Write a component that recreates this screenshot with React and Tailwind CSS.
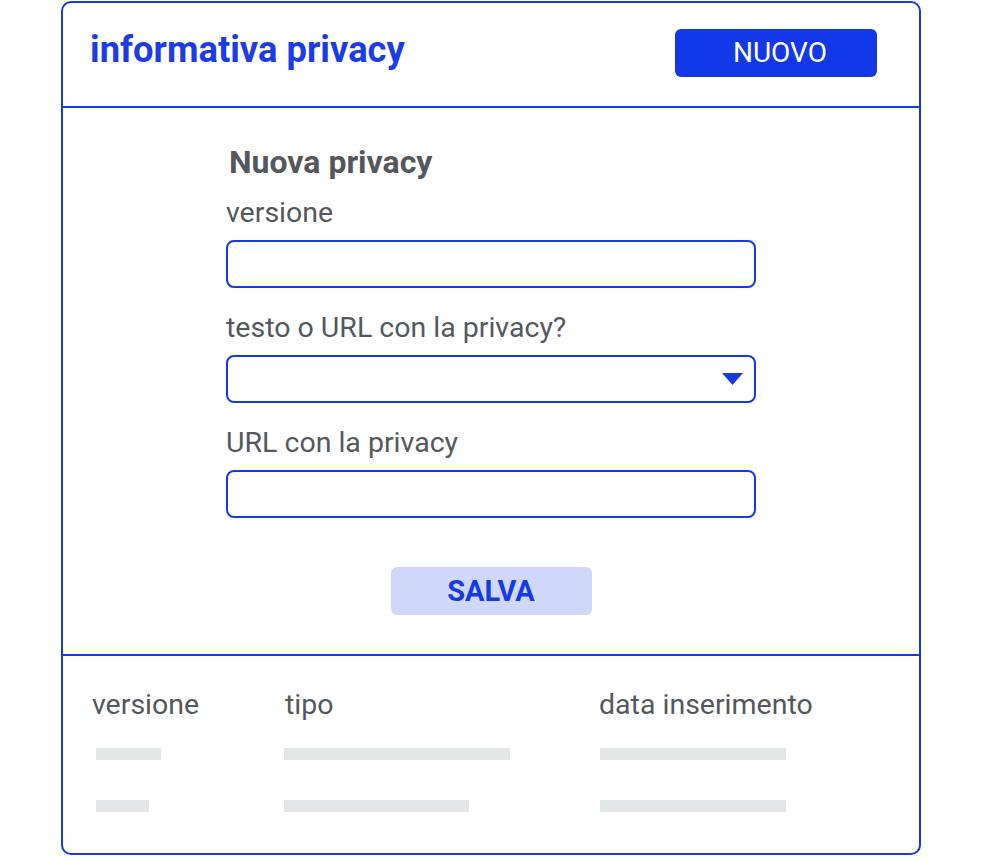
import React from "react";

const BLUE = "#1639e6";

const Field = ({ label, select, first }) => (
  <div className={first ? "mt-[21px]" : "mt-[26px]"}>
    <div className="text-[28.5px] leading-none text-[#54585c]">{label}</div>
    <div className="mt-[12.5px] h-[48px] rounded-[8px] border-2 border-[#1639e6] bg-white flex items-center justify-end pr-[11px]">
      {select && (
        <svg width="21" height="12" viewBox="0 0 21 12">
          <path d="M0 0h21L10.5 12z" fill={BLUE} />
        </svg>
      )}
    </div>
  </div>
);

const rows = [
  { v: "w-[65px]", t: "w-[226px]", d: "w-[186px]" },
  { v: "w-[53px]", t: "w-[185px]", d: "w-[186px]" },
];

export default function App() {
  return (
    <div className="min-h-[861px] bg-white font-['Roboto',sans-serif] pt-[1px]">
      <div className="ml-[61px] w-[860px] rounded-[10px] border-2 border-[#1639e6] bg-white">
        {/* Header */}
        <div className="h-[105px] flex items-start justify-between pl-[27px] pr-[42px] border-b-2 border-[#1639e6]">
          <h1 className="mt-[29px] text-[36.4px] leading-none font-bold text-[#1a3de8]">
            informativa privacy
          </h1>
          <button className="mt-[26px] w-[202px] h-[48px] rounded-[6px] bg-[#1238e8] text-white text-[28px] leading-none flex items-center justify-center pl-[8px]">
            NUOVO
          </button>
        </div>

        {/* Form */}
        <div className="pt-[38px] pb-[39px] border-b-2 border-[#1639e6]">
          <div className="w-[530px] mx-auto">
            <h2 className="ml-[3px] text-[32px] leading-none font-bold text-[#54585c]">
              Nuova privacy
            </h2>
            <Field label="versione" first />
            <Field label="testo o URL con la privacy?" select />
            <Field label="URL con la privacy" />
            <div className="mt-[49px] flex justify-center">
              <button className="w-[201px] h-[48px] rounded-[6px] bg-[#d0d8f9] text-[#1639e6] text-[29px] leading-none font-bold">
                SALVA
              </button>
            </div>
          </div>
        </div>

        {/* Table */}
        <div className="pt-[35px] pb-[41px] pl-[29px]">
          <div className="grid grid-cols-[192px_315px_1fr] text-[28.5px] leading-none text-[#54585c]">
            <div>versione</div>
            <div className="ml-[1px]">tipo</div>
            <div>data inserimento</div>
          </div>
          {rows.map((r, i) => (
            <div
              key={i}
              className={`grid grid-cols-[192px_315px_1fr] h-[12px] ${i === 0 ? "mt-[28.5px]" : "mt-[40px]"}`}
            >
              <div className={`ml-[4px] h-[12px] bg-[#e3e6e7] ${r.v}`} />
              <div className={`h-[12px] bg-[#e3e6e7] ${r.t}`} />
              <div className={`ml-[1px] h-[12px] bg-[#e3e6e7] ${r.d}`} />
            </div>
          ))}
        </div>
      </div>
    </div>
  );
}
